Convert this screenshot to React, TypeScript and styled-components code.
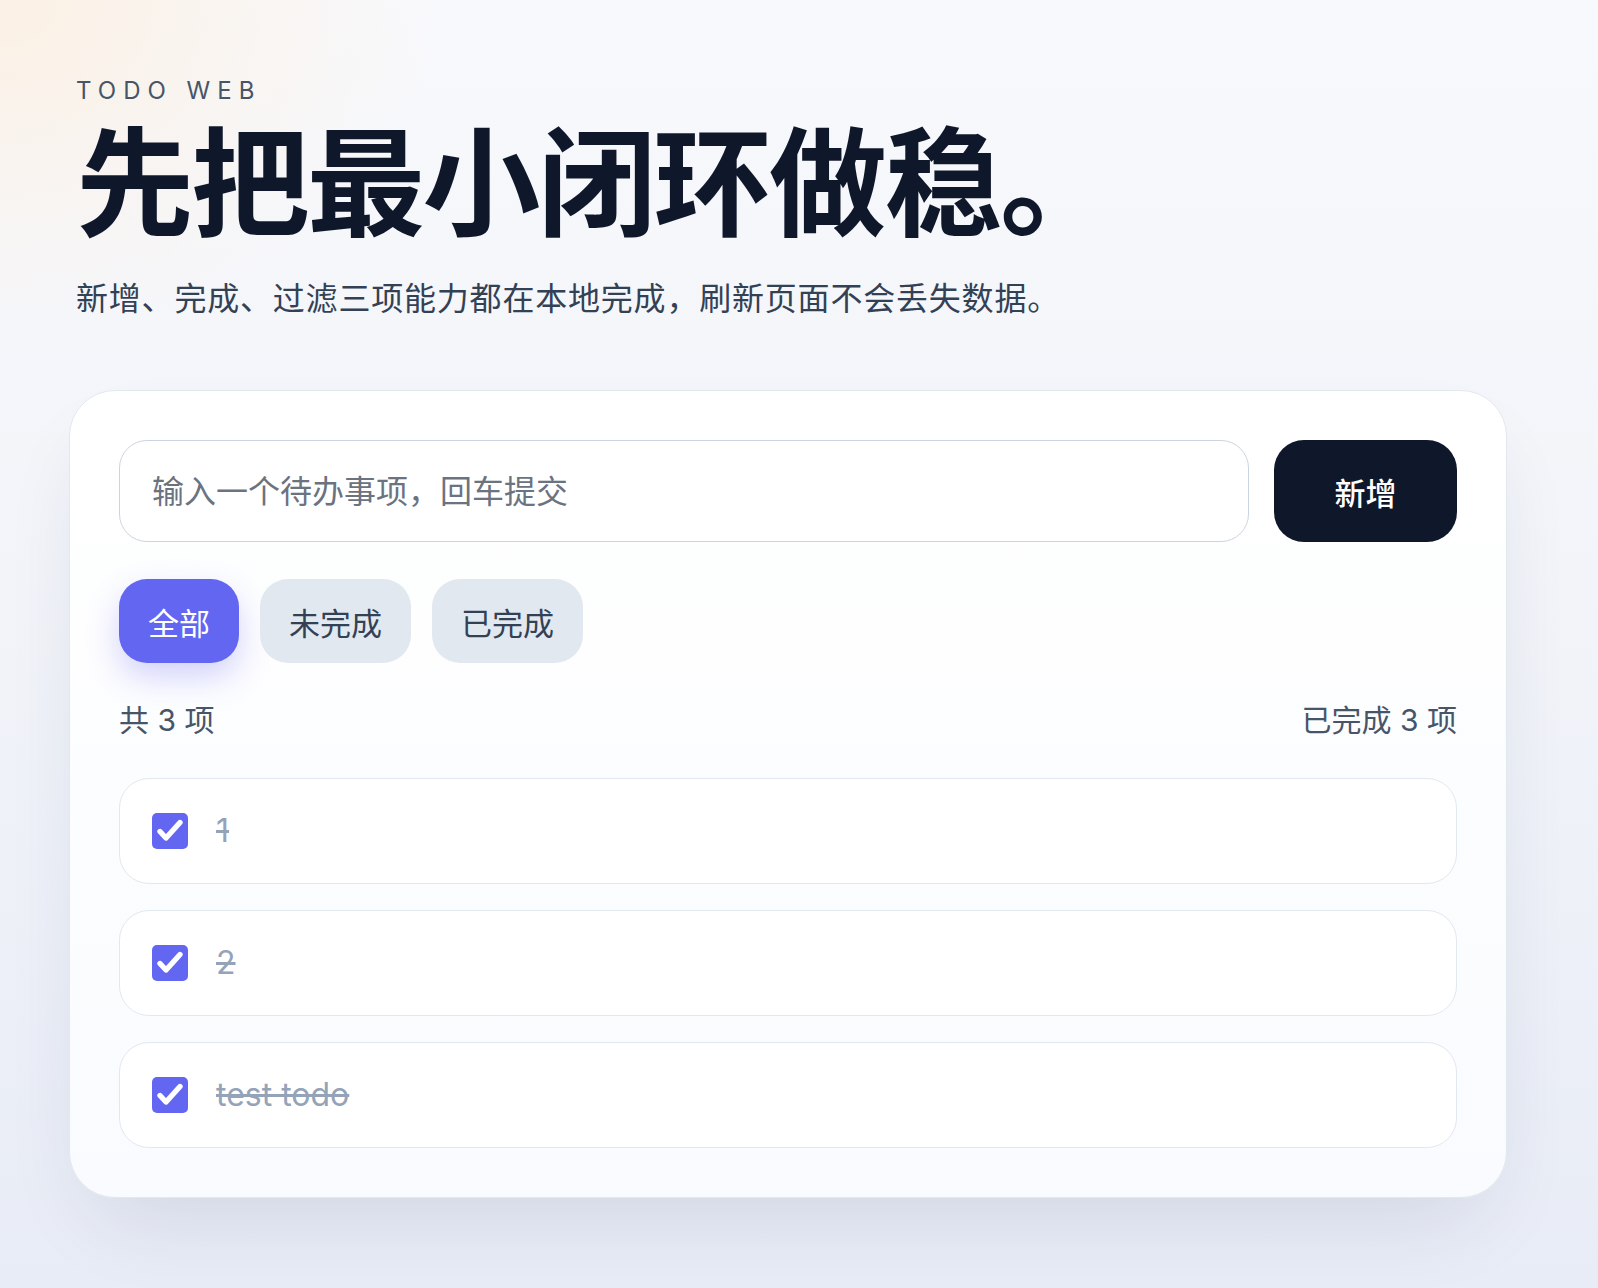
import styled, { createGlobalStyle } from 'styled-components';

const GlobalStyle = createGlobalStyle`
	* {
		box-sizing: border-box;
	}
	html, body {
		margin: 0;
		padding: 0;
	}
	body {
		font-family: Inter, "Noto Sans CJK SC", sans-serif;
		color: #0f172a;
		min-height: 100vh;
		background:
			radial-gradient(620px 480px at 0 0, rgba(252, 238, 222, 0.8), rgba(252, 238, 222, 0) 70%),
			linear-gradient(180deg, #f8f9fc 0%, #f2f4f9 45%, #e8ecf6 100%);
	}
`;

const Page = styled.main`
	min-height: 100vh;
	padding: 76px 91px 80px 69px;
`;

const Header = styled.header`
	padding-left: 7px;
`;

const Eyebrow = styled.div`
	font-size: 24px;
	line-height: 30px;
	letter-spacing: 7px;
	color: #475569;
	font-weight: 400;
`;

const Title = styled.h1`
	margin: 19px 0 0;
	font-size: 118px;
	line-height: 118px;
	font-weight: 700;
	letter-spacing: -2.5px;
	color: #0f172a;
`;

const Subtitle = styled.p`
	margin: 36px 0 0;
	font-size: 32px;
	line-height: 40px;
	letter-spacing: 0.8px;
	color: #334155;
`;

const Card = styled.section`
	margin-top: 71px;
	padding: 49px;
	border: 1px solid #e2e8f0;
	border-radius: 46px;
	background: linear-gradient(180deg, #ffffff 0%, #f9fbfe 100%);
	box-shadow: 0 40px 90px -30px rgba(30, 41, 90, 0.14);
`;

const Composer = styled.form`
	display: flex;
	gap: 25px;
`;

const TextInput = styled.input`
	flex: 1;
	height: 102px;
	padding: 0 32px;
	border: 1px solid #cbd5e1;
	border-radius: 28px;
	background: #ffffff;
	font-family: inherit;
	font-size: 32px;
	color: #0f172a;
	outline: none;

	&::placeholder {
		color: #6b7280;
	}
`;

const AddButton = styled.button`
	width: 183px;
	height: 102px;
	border: none;
	border-radius: 30px;
	background: #0f172a;
	color: #ffffff;
	font-family: inherit;
	font-size: 31px;
	font-weight: 500;
	cursor: pointer;
`;

const Filters = styled.div`
	display: flex;
	gap: 21px;
	margin-top: 37px;
`;

const FilterButton = styled.button<{ $active?: boolean }>`
	height: 84px;
	padding: 0 29px;
	border: none;
	border-radius: 28px;
	font-family: inherit;
	font-size: 31px;
	font-weight: 400;
	cursor: pointer;
	background: ${(p) => (p.$active ? '#6366f1' : '#e2e8f0')};
	color: ${(p) => (p.$active ? '#ffffff' : '#334155')};
	box-shadow: ${(p) => (p.$active ? '0 14px 32px rgba(99, 102, 241, 0.28)' : 'none')};
`;

const Summary = styled.div`
	display: flex;
	justify-content: space-between;
	margin: 39px 0 40px;
	font-size: 30px;
	line-height: 36px;
	color: #475569;
`;

const List = styled.ul`
	list-style: none;
	margin: 0;
	padding: 0;
	display: flex;
	flex-direction: column;
	gap: 26px;
`;

const Item = styled.li`
	display: flex;
	align-items: center;
	gap: 28px;
	height: 106px;
	padding: 0 32px;
	border: 1px solid #e2e8f0;
	border-radius: 30px;
	background: #ffffff;
`;

const Check = styled.span<{ $checked?: boolean }>`
	display: flex;
	width: 36px;
	height: 36px;
	border-radius: 5px;
	background: ${(p) => (p.$checked ? '#6366f1' : '#ffffff')};
	border: ${(p) => (p.$checked ? 'none' : '2px solid #94a3b8')};
	flex-shrink: 0;
`;

const ItemText = styled.span<{ $done?: boolean }>`
	font-size: 32px;
	line-height: 40px;
	color: ${(p) => (p.$done ? '#94a3b8' : '#0f172a')};
	text-decoration: ${(p) => (p.$done ? 'line-through' : 'none')};
`;

const todos = [
	{ id: 1, text: '1', done: true },
	{ id: 2, text: '2', done: true },
	{ id: 3, text: 'test todo', done: true },
];

function CheckMark() {
	return (
		<svg width="36" height="36" viewBox="0 0 36 36" fill="none">
			<path
				d="M8 18.5 L14 25 L28 9.5"
				stroke="#ffffff"
				strokeWidth="5.4"
				strokeLinecap="round"
				strokeLinejoin="round"
			/>
		</svg>
	);
}

export default function App() {
	const doneCount = todos.filter((t) => t.done).length;
	return (
		<>
			<GlobalStyle />
			<Page>
				<Header>
					<Eyebrow>TODO WEB</Eyebrow>
					<Title>先把最小闭环做稳。</Title>
					<Subtitle>新增、完成、过滤三项能力都在本地完成，刷新页面不会丢失数据。</Subtitle>
				</Header>
				<Card>
					<Composer onSubmit={(e) => e.preventDefault()}>
						<TextInput placeholder="输入一个待办事项，回车提交" />
						<AddButton type="submit">新增</AddButton>
					</Composer>
					<Filters>
						<FilterButton $active>全部</FilterButton>
						<FilterButton>未完成</FilterButton>
						<FilterButton>已完成</FilterButton>
					</Filters>
					<Summary>
						<span>共 {todos.length} 项</span>
						<span>已完成 {doneCount} 项</span>
					</Summary>
					<List>
						{todos.map((todo) => (
							<Item key={todo.id}>
								<Check $checked={todo.done}>{todo.done && <CheckMark />}</Check>
								<ItemText $done={todo.done}>{todo.text}</ItemText>
							</Item>
						))}
					</List>
				</Card>
			</Page>
		</>
	);
}
